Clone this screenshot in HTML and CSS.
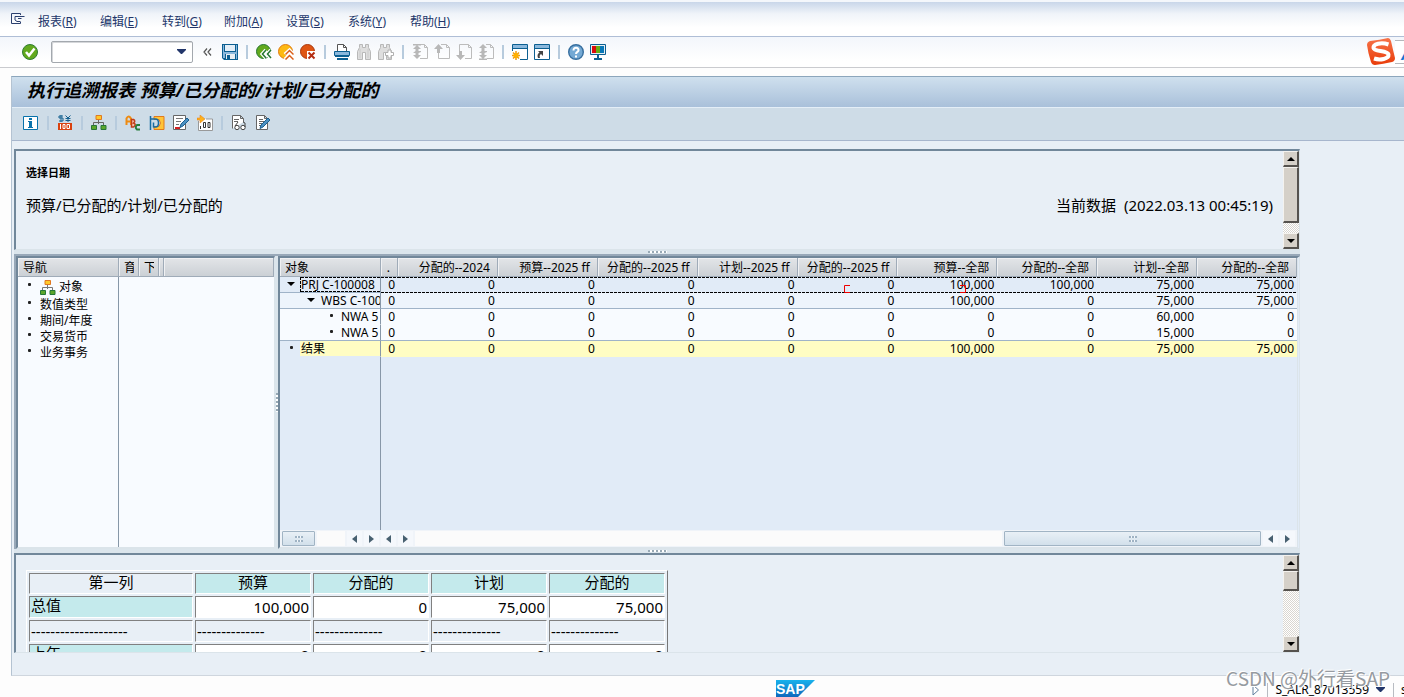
FILE: index.html
```html
<!DOCTYPE html>
<html lang="zh-CN">
<head>
<meta charset="utf-8">
<title>执行追溯报表</title>
<link rel="stylesheet" href="styles.css">
</head>
<body>
<nav class="menubar">
  <svg class="menu-icon" width="16" height="14" viewBox="0 0 16 14"><path d="M10.500 3V1.500H1.500v10h9V10M5 4.500h9.500M5 4.500v3.500l2 1.500h3.500M8 6.500h3.500" fill="none" stroke="#2b3f6e"/></svg>
  <div class="menus">
    <button>报表(<u>R</u>)</button><button>编辑(<u>E</u>)</button><button>转到(<u>G</u>)</button><button>附加(<u>A</u>)</button><button>设置(<u>S</u>)</button><button>系统(<u>Y</u>)</button><button>帮助(<u>H</u>)</button>
  </div>
</nav>

<div class="toolbar">
  <button class="ico ok" aria-label="回车"><svg viewBox="0 0 16 16"><circle cx="8" cy="8" r="7.500" fill="#62a91e" stroke="#2f7d32"/><path d="M4 8l3 3.500L12.500 4.500" fill="none" stroke="#fff" stroke-width="2.500"/></svg></button>
  <div class="command"><input type="text" aria-label="命令"><svg viewBox="0 0 10 6"><path d="M0 0h9v1L5 5H4L0 1z" fill="#22366a"/></svg></div>
  <button class="collapse" aria-label="收起"><svg viewBox="0 0 9 8"><path d="M4 .500L1 4l3 3.500M8 .500L5 4l3 3.500" fill="none" stroke="#555" stroke-width="1.200"/></svg></button>
  <button class="ico" aria-label="保存"><svg viewBox="0 0 16 16"><path d="M0 0h16v16H2l-2-2z" fill="#0c5f91"/><path d="M3 1h10v6H3z" fill="#e4eff8"/><path d="M1 8h14v2H1zM1 1h1v7H1zM14 1h1v7h-1zM1 10h2v4H1zM14 10h1v5h-1z" fill="#8bb8dc"/><path d="M4 10h9v5H4z" fill="#e8eef2"/><path d="M5 11h3v4H5z" fill="#0c5f91"/></svg></button>
  <i class="sep"></i>
  <button class="ico" aria-label="返回"><svg viewBox="0 0 16 16"><circle cx="7.500" cy="7.500" r="7" fill="#62a91e" stroke="#257632"/><path d="M10 6l-3.500 4 3.500 4M15 6l-3.500 4 3.500 4" fill="none" stroke="#fff" stroke-width="4"/><path d="M10 6l-3.500 4 3.500 4M15 6l-3.500 4 3.500 4" fill="none" stroke="#257632" stroke-width="1.500"/></svg></button>
  <button class="ico" aria-label="退出"><svg viewBox="0 0 16 16"><circle cx="7.500" cy="7.500" r="7" fill="#fdb913" stroke="#df7a12"/><path d="M7 10.500l4.500-4 4 4M7 15.500l4.500-4 4 4" fill="none" stroke="#fff" stroke-width="4"/><path d="M7.500 10.500l4-4 4 4M7.500 15.500l4-4 4 4" fill="none" stroke="#d95c18" stroke-width="1.500"/></svg></button>
  <button class="ico" aria-label="取消"><svg viewBox="0 0 16 16"><circle cx="7.500" cy="7.500" r="7" fill="#df5513" stroke="#a8380f"/><path d="M7 7h9v9H7z" fill="#fff"/><path d="M8.500 8.500l6 6M14.500 8.500l-6 6" stroke="#b42d12" stroke-width="2"/></svg></button>
  <i class="sep"></i>
  <button class="ico" aria-label="打印"><svg viewBox="0 0 16 16"><path d="M3.500 7V.500h6L12.500 3.500V7" fill="#fff" stroke="#555"/><path d="M9.500.500v3h3" fill="none" stroke="#555"/><path d="M.500 7.500h15v4H.500z" fill="#8bb8dc" stroke="#0c5f91"/><path d="M1 12h14v1H1zM3 14h11v2H3z" fill="#0c5f91"/></svg></button>
  <button class="ico" aria-label="查找" disabled><svg viewBox="0 0 16 16"><path d="M1.500 15.500v-8l2-4v-3h3v3h3v-3h3v3l2 4v8h-5v-7h-3v7z" fill="#dedede" stroke="#b8b8b8"/><path d="M4 5v9M12 5v9" stroke="#cacaca"/></svg></button>
  <button class="ico" aria-label="继续查找" disabled><svg viewBox="0 0 16 16"><path d="M.500 15.500v-8l2-4v-3h3v3h3v-3h3v3l2 4v8h-5v-7h-3v7z" fill="#dedede" stroke="#b8b8b8"/><path d="M10 6h3v2.500h2.500v3H13V14h-3v-2.500H7.500v-3H10z" fill="#fff" stroke="#b0b0b0"/></svg></button>
  <i class="sep"></i>
  <button class="ico" aria-label="首页" disabled><svg viewBox="0 0 16 16"><path d="M9 .500h3.500l3 3v11H8M12.500.500v3h3" fill="none" stroke="#bcbcbc"/><path d="M1 0h8v1.500H1zM5 1l4 4H6.500v2H9v1L6.500 9v2H9l-4 4-4-4h2.500V9H1l2.500-2V5H1z" fill="#b8b8b8"/></svg></button>
  <button class="ico" aria-label="上页" disabled><svg viewBox="0 0 16 16"><path d="M7 .500h5.500l3 3v11H4.500V8M12.500.500v3h3" fill="none" stroke="#bcbcbc"/><path d="M4.500 0L9 5H6v4H3V5H0z" fill="#b8b8b8"/></svg></button>
  <button class="ico" aria-label="下页" disabled><svg viewBox="0 0 16 16"><path d="M3.500 7V.500h9l3 3v11H9M12.500.500v3h3" fill="none" stroke="#bcbcbc"/><path d="M4.500 16L0 11h3V7h3v4h3z" fill="#b8b8b8"/></svg></button>
  <button class="ico" aria-label="末页" disabled><svg viewBox="0 0 16 16"><path d="M8 .500h4.500l3 3v11H9M12.500.500v3h3" fill="none" stroke="#bcbcbc"/><path d="M5 0l4 4H6.500v3H9v1L6.500 9v2H9l-4 4-4-4h2.500V9H1l2.500-2V4H1zM1 14.500h8V16H1z" fill="#b8b8b8"/></svg></button>
  <i class="sep"></i>
  <button class="ico" aria-label="新窗口"><svg viewBox="0 0 16 16"><path d="M.500.500h15v15H.500z" fill="#fff" stroke="#0c5f91"/><path d="M1 1h14v3H1z" fill="#8bb8dc"/><path d="M0 4h16v1H0z" fill="#0c5f91"/><path d="M0 7h8v9H0z" fill="#fff"/><path d="M4 7v9M0 11.500h8M1 8.500l6 6M7 8.500l-6 6" stroke="#ee9a10" stroke-width="1.500"/><circle cx="4" cy="11.500" r="2.500" fill="#ffb000"/></svg></button>
  <button class="ico" aria-label="快捷方式"><svg viewBox="0 0 16 16"><path d="M.500.500h15v15H.500z" fill="#fff" stroke="#0c5f91"/><path d="M1 1h14v3H1z" fill="#8bb8dc"/><path d="M0 4h16v1H0z" fill="#0c5f91"/><path d="M4 7h5v5L7 10q-2 1-1 4h-2q-1.500-4 1.500-5.500z" fill="#444"/></svg></button>
  <i class="sep"></i>
  <button class="ico" aria-label="帮助"><svg viewBox="0 0 16 16"><circle cx="8" cy="8" r="7.300" fill="#74a9d4" stroke="#376f9f" stroke-width="1.400"/><path d="M5.500 6.500c0-4 5.500-3.500 5 0C10.300 8 8 8 8 10M8 11.500v2" fill="none" stroke="#fff" stroke-width="2"/></svg></button>
  <button class="ico" aria-label="布局"><svg viewBox="0 0 16 16"><path d="M.500.500h15v10H.500z" fill="#e6eef4" stroke="#0c5f91"/><path d="M2 2h4v7H2z" fill="#d90b0b"/><path d="M6 2h4v7H6z" fill="#69ad13"/><path d="M10 2h4v7h-4z" fill="#0878b8"/><path d="M7 11h2v3h3v2H4v-2h3z" fill="#0c5f91"/></svg></button>
  <div class="ime">
    <svg class="ime-logo" viewBox="0 0 28 28"><defs><linearGradient id="sg" x2="0" y2="1"><stop stop-color="#f77349"/><stop offset="1" stop-color="#e93c09"/></linearGradient></defs><path d="M3 3Q13 2 21 0Q23 0 24 3Q26 12 28 20Q28 23 25 24Q16 26 8 27Q5 27 4 24Q1 15 0 7Q0 4 3 3z" fill="url(#sg)"/><path d="M21.500 6.500C14 4 6 6 6.500 10C7 14 20.500 12 21.500 16.500C22 21 13 22.500 7 20.500" fill="none" stroke="#fff" stroke-width="4"/></svg>
    <span>A</span>
  </div>
</div>

<main class="window">
  <h1 class="title">执行追溯报表 预算/已分配的/计划/已分配的</h1>
  <div class="apptools">
    <button class="ico" aria-label="信息"><svg viewBox="0 0 16 16"><path d="M.500 1.500h14v13H.500z" fill="#fff" stroke="#0872ab"/><path d="M6 3h3v2H6zM5 6h4v6h1v1H5v-1h1V7H5z" fill="#0872ab"/></svg></button>
    <i class="sep"></i>
    <button class="ico" aria-label="货币"><svg viewBox="0 0 16 16"><path d="M6 1H2v2h4v3H2M4 0v7M8.500.500L11 3l2.500-2.500M11 3v4M8.500 3.500h5M8.500 5.500h5" fill="none" stroke="#14608f"/><path d="M1 8h14v7H1z" fill="#d9420f"/><path d="M3.500 9v5M6 9.500h2v4H6zM10 9.500h2.500v4H10z" fill="none" stroke="#fff"/></svg></button>
    <i class="sep"></i>
    <button class="ico" aria-label="层次"><svg viewBox="0 0 16 16"><path d="M7.500 5v4M2.500 10V7.500h10V10" fill="none" stroke="#666"/><path d="M5 .500h5.500v4H5z" fill="#ffc928" stroke="#e07820"/><path d="M.500 10.500h5v4h-5zM10 10.500h5v4h-5z" fill="#5aa62b" stroke="#267638"/></svg></button>
    <i class="sep"></i>
    <button class="ico" aria-label="文本"><svg viewBox="0 0 16 16"><path d="M1.500 10V3.500Q3.500-.500 6 3.500V10M2 6.500h4" fill="none" stroke="#ee8b12" stroke-width="2"/><path d="M6.500 12V4.500h2q2.500 1.500 0 3.500q3.500 1.500 0 4z" fill="#f3c6b4" stroke="#c13d18" stroke-width="1.500"/><path d="M15 10h-3q-2.500 2 0 4.500h3" fill="none" stroke="#287e3d" stroke-width="2"/></svg></button>
    <button class="ico" aria-label="交换"><svg viewBox="0 0 16 16"><path d="M5 1.500h10v13H5v-3h5q3-3.500 0-7H5z" fill="#ffc438" stroke="#e27a1b"/><path d="M1.500 1v14M1.500 4h5q3 0 3 4t-3 4h-2M4.500 7.500v5" fill="none" stroke="#176ca3" stroke-width="1.500"/></svg></button>
    <button class="ico" aria-label="编辑"><svg viewBox="0 0 16 16"><path d="M.500.500h12v14H.500z" fill="#fff" stroke="#666"/><path d="M3 3.500h7M3 6.500h5M3 9.500h3" stroke="#777"/><path d="M2 12h5v2H2z" fill="#d51f20"/><path d="M7 12.500l1-3.500 6-6 2 2-6 6z" fill="#4c91c2" stroke="#195f91"/></svg></button>
    <button class="ico" aria-label="小数位"><svg viewBox="0 0 16 16"><path d="M1.500 6v9.500h14V4H9" fill="#fff" stroke="#999"/><path d="M0 3h3V0l5 4-5 4V5H0z" fill="#ffb21b" stroke="#e17b18" stroke-width=".500"/><path d="M6.500 7.500h2v5h-2zM11 7.500h2v5h-2zM3.500 11v3" fill="none" stroke="#333"/></svg></button>
    <i class="sep"></i>
    <button class="ico" aria-label="显示"><svg viewBox="0 0 16 16"><path d="M1.500 13.500V.500h8l3 3V7M9.500.500v3h3" fill="#fff" stroke="#666"/><path d="M3 4.500h5M3 6.500h4" stroke="#666"/><circle cx="6" cy="12.500" r="2.200" fill="#fff" stroke="#444"/><circle cx="12" cy="12.500" r="2.200" fill="#fff" stroke="#444"/><path d="M4 11l3-4M14 12V8l-2-1" fill="none" stroke="#444"/></svg></button>
    <button class="ico" aria-label="更改"><svg viewBox="0 0 16 16"><path d="M1.500.500h8l3 3v11h-11zM9.500.500v3h3" fill="#fff" stroke="#666"/><path d="M4 4.500h4M4 6.500h5M4 8.500h3M4 10.500h2" stroke="#666"/><path d="M5 13.500l1-3.500 7-7 2 2-7 7z" fill="#4c91c2" stroke="#195f91"/></svg></button>
  </div>

  <div class="panes">
    <section class="pane info">
      <div class="info-text">
        <h2>选择日期</h2>
        <div class="info-line"><span>预算/已分配的/计划/已分配的</span><span>当前数据&nbsp; (2022.03.13 00:45:19)</span></div>
      </div>
      <div class="vscroll"><button class="up" aria-label="上"></button><div class="thumb"></div><div class="track short"></div><button class="down" aria-label="下"></button></div>
    </section>
    <div class="hsplit"></div>

    <section class="middle">
      <div class="pane nav">
        <table class="tree">
          <colgroup><col class="c-name"><col class="c-small"><col class="c-small"><col class="c-tiny"><col></colgroup>
          <thead><tr><th>导航</th><th><span class="clip">育</span></th><th><span class="clip">下</span></th><th></th><th></th></tr></thead>
          <tbody>
            <tr class="first"><td><i class="dot"></i><svg width="16" height="16" viewBox="0 0 16 16"><path d="M7.500 5v4M2.500 10V7.500h10V10" fill="none" stroke="#777"/><path d="M5 .500h5.500v4H5z" fill="#ffc928" stroke="#e07820"/><path d="M.500 10.500h5v4h-5zM10 10.500h5v4h-5z" fill="#5aa62b" stroke="#267638"/></svg> 对象</td></tr>
            <tr><td><i class="dot"></i>数值类型</td></tr>
            <tr><td><i class="dot"></i>期间/年度</td></tr>
            <tr><td><i class="dot"></i>交易货币</td></tr>
            <tr><td><i class="dot"></i>业务事务</td></tr>
          </tbody>
        </table>
        <div class="fill"></div>
      </div>
      <div class="vsplit"></div>
      <div class="pane report">
        <table class="grid">
          <colgroup><col class="c-obj"><col class="c-dot"><col span="9"></colgroup>
          <thead><tr><th class="left">对象</th><th>.</th><th>分配的--2024</th><th>预算--2025 ff</th><th>分配的--2025 ff</th><th>计划--2025 ff</th><th>分配的--2025 ff</th><th>预算--全部</th><th>分配的--全部</th><th>计划--全部</th><th>分配的--全部</th></tr></thead>
          <tbody>
            <tr class="sel"><td><div class="node"><i class="mark tri"></i><span>PRJ C-100008</span></div></td><td>0</td><td>0</td><td>0</td><td>0</td><td>0</td><td>0</td><td>100,000</td><td>100,000</td><td>75,000</td><td>75,000</td></tr>
            <tr class="wbs"><td><div class="node l1"><i class="mark tri"></i><span>WBS C-100</span></div></td><td>0</td><td>0</td><td>0</td><td>0</td><td>0</td><td>0</td><td>100,000</td><td>0</td><td>75,000</td><td>75,000</td></tr>
            <tr class="nwa"><td><div class="node l2"><i class="mark"></i><span>NWA 5</span></div></td><td>0</td><td>0</td><td>0</td><td>0</td><td>0</td><td>0</td><td>0</td><td>0</td><td>60,000</td><td>0</td></tr>
            <tr class="nwa last"><td><div class="node l2"><i class="mark"></i><span>NWA 5</span></div></td><td>0</td><td>0</td><td>0</td><td>0</td><td>0</td><td>0</td><td>0</td><td>0</td><td>15,000</td><td>0</td></tr>
            <tr class="sum"><td><div class="node"><i class="mark"></i><span>结果</span></div></td><td>0</td><td>0</td><td>0</td><td>0</td><td>0</td><td>0</td><td>100,000</td><td>0</td><td>75,000</td><td>75,000</td></tr>
          </tbody>
        </table>
        <div class="fill"></div>
        <div class="hbars">
          <div class="hbar left"><div class="hthumb"></div><div class="space"></div><button class="prev" aria-label="左"></button><button class="next" aria-label="右"></button></div>
          <div class="hbar right"><button class="prev" aria-label="左"></button><button class="next" aria-label="右"></button><div class="space"></div><div class="hthumb wide"></div><button class="prev" aria-label="左"></button><button class="next" aria-label="右"></button></div>
        </div>
        <svg class="corner a" viewBox="0 0 6 8"><path d="M6 .500H.500V7.500H6" fill="none" stroke="#e00"/></svg>
        <svg class="corner b" viewBox="0 0 6 8"><path d="M0 .500H5.500V7.500H0" fill="none" stroke="#e00"/></svg>
      </div>
    </section>
    <div class="hsplit"></div>

    <section class="pane detail">
      <div class="detail-body">
        <table class="values">
          <thead><tr><th class="plain">第一列</th><th>预算</th><th>分配的</th><th>计划</th><th>分配的</th></tr></thead>
          <tbody>
            <tr><th>总值</th><td>100,000</td><td>0</td><td>75,000</td><td>75,000</td></tr>
            <tr class="rule"><td>--------------------</td><td>--------------</td><td>--------------</td><td>--------------</td><td>--------------</td></tr>
            <tr><th>上年</th><td>0</td><td>0</td><td>0</td><td>0</td></tr>
          </tbody>
        </table>
      </div>
      <div class="vscroll"><button class="up" aria-label="上"></button><div class="thumb small"></div><div class="track"></div><button class="down" aria-label="下"></button></div>
    </section>
  </div>
</main>

<footer class="status">
  <svg class="sap" width="39" height="17" viewBox="0 0 39 17"><defs><linearGradient id="sp" x2="0" y2="1"><stop stop-color="#19b2ec"/><stop offset="1" stop-color="#0f68bc"/></linearGradient></defs><path d="M0 0h39L22 17H0z" fill="url(#sp)"/><text x="0" y="14" font-family="Liberation Sans, sans-serif" font-weight="bold" font-size="14" fill="#fff">SAP</text></svg>
  <div class="session">
    <svg width="8" height="12" viewBox="0 0 8 12"><path d="M1 1l5.500 5L1 11z" fill="#fff" stroke="#5f7f9d"/></svg>
    <i class="bar"></i><span>S_ALR_87013559</span>
    <svg width="10" height="6" viewBox="0 0 10 6"><path d="M0 0h9v1L5 5H4L0 1z" fill="#22366a"/></svg>
    <i class="bar"></i><span class="server">s</span>
  </div>
</footer>
<div class="watermark">CSDN @外行看SAP</div>
</body>
</html>
```
FILE: styles.css
```css
* { box-sizing: border-box; }
body {
  margin: 0;
  height: 100vh;
  overflow: hidden;
  display: flex;
  flex-direction: column;
  background: #fdfdfd;
  color: #000;
  font: 12px/16px "Noto Sans", "Noto Sans CJK SC", sans-serif;
}
button { border: 0; padding: 0; margin: 0; background: none; font: inherit; color: inherit; }
table { border-collapse: separate; border-spacing: 0; }
svg { display: block; flex: none; }

.menubar {
  flex: none;
  height: 37px;
  display: flex;
  align-items: center;
  padding: 6px 0 0 10px;
  border-top: 2px solid #f4f7fb;
  border-bottom: 1px solid #afbed6;
  background: linear-gradient(#c9d6e9, #f0f4f9 35%, #fff 75%);
}
.menu-icon { margin: 0 12px 6px 0; }
.menus { display: grid; grid-auto-flow: column; grid-auto-columns: 62px; color: #22366a; }
.menus button { text-align: left; white-space: nowrap; }

.toolbar {
  flex: none;
  height: 31px;
  display: flex;
  align-items: center;
  gap: 6px;
  padding: 0 0 1px 22px;
  border-bottom: 1px solid #cacbcf;
  background: linear-gradient(#f3f6fb, #fff 80%);
}
.ico { width: 16px; height: 16px; flex: none; }
.ico svg { width: 16px; height: 16px; }
.ok { margin-right: 7px; }
.sep { flex: none; width: 2px; height: 14px; margin: 0 2px; background: #b7cbdd; }
.command { position: relative; width: 142px; }
.command input { display: block; width: 100%; height: 22px; border: 1px solid #a3a8ae; border-radius: 2px; background: #fff; box-shadow: inset 1px 1px 0 #d5d7da; }
.command svg { position: absolute; right: 6px; top: 8px; width: 10px; height: 6px; }
.collapse { margin: 0 4px; }
.collapse svg { width: 9px; height: 8px; }
.ime { margin-left: auto; width: 37px; display: flex; align-items: center; overflow: hidden; }
.ime-logo { width: 28px; height: 28px; }
.ime span { flex: none; width: 40px; height: 24px; padding-left: 6px; border: 1px solid #b5b7bb; border-left: 0; background: #fff; color: #1474d4; font: italic bold 18px/26px "Liberation Sans", sans-serif; }

.window {
  flex: 1;
  min-height: 0;
  display: flex;
  flex-direction: column;
  margin: 8px 0 0 11px;
  border-top: 1px solid #8ca6bc;
  border-left: 1px solid #b4c3d2;
  border-bottom: 1px solid #cfd6de;
  background: #e8eff6;
}
.title {
  flex: none;
  margin: 0;
  height: 31px;
  padding-left: 15px;
  border-bottom: 1px solid #e4eef7;
  background: linear-gradient(#cfe0ee, #a9c0da);
  font: italic bold 18px/26px "Noto Sans", "Noto Sans CJK SC", sans-serif;
  white-space: nowrap;
}
.apptools { flex: none; display: flex; align-items: center; gap: 8px; height: 33px; padding: 0 0 2px 11px; border-bottom: 1px solid #a7b6cd; background: #cedce7; }
.apptools .sep { margin: 0; }

.panes { flex: 1; min-height: 0; display: flex; flex-direction: column; margin: 8px 104px 22px 2px; }
.pane { border: 1px solid #dbe4ea; border-top: 2px solid #71879a; border-left: 2px solid #71879a; }
.info { flex: none; height: 101px; display: flex; }
.info-text { flex: 1; padding: 13px 10px 0; }
.info h2 { margin: 0; font-size: 11px; line-height: 18px; }
.info-line { display: flex; justify-content: space-between; margin-top: 12px; font-size: 15px; line-height: 22px; }

.vscroll { flex: none; width: 16px; display: flex; flex-direction: column; }
.vscroll button, .thumb { flex: none; height: 16px; display: grid; place-items: center; background: #d5d0c8; border: 1px solid #f4f2ee; border-right: 2px solid #55524e; border-bottom: 2px solid #55524e; }
.vscroll button::before { content: ""; border: 4px solid transparent; border-top-width: 0; border-bottom-color: #000; }
.vscroll .down::before { border-width: 4px 4px 0; border-top-color: #000; }
.vscroll .thumb { height: 56px; }
.vscroll .thumb.small { height: 20px; }
.track { flex: 1; background: repeating-conic-gradient(#fff 0 25%, #d9d6d0 0 50%) 0 0 / 2px 2px; }

.hsplit { flex: none; height: 4px; display: grid; place-items: center; background: #dbe5ec; }
.hsplit::before { content: ""; width: 19px; height: 2px; background: repeating-linear-gradient(90deg, #98a9b5 0 2px, #fff 2px 4px); }

.middle { flex: 1; min-height: 0; display: flex; border-top: 2px solid #98a8b8; border-left: 2px solid #98a8b8; }
.nav, .report { display: flex; flex-direction: column; min-width: 0; }
.nav { width: 259px; flex: none; background: #f8fbff; border-bottom-width: 2px; }
.vsplit { flex: none; width: 3px; display: grid; place-items: center; background: #dbe5ec; }
.vsplit::before { content: ""; width: 2px; height: 19px; background: repeating-linear-gradient(#98a9b5 0 2px, #fff 2px 4px); }
.report { flex: 1; position: relative; background: #e1ebf7; border-right: 3px double #dbe4ea; border-bottom: 2px solid #dbe4ea; }

.tree, .grid { flex: none; width: 100%; table-layout: fixed; }
.tree th, .grid th { height: 19px; padding: 2px 7px 0 0; border-right: 1px solid #9fabb8; border-bottom: 1px solid #9fabb8; background: linear-gradient(#e3e5e8, #cbd0d5); box-shadow: inset 1px 1px 0 #f0f1f3; font-weight: normal; line-height: 16px; text-align: right; white-space: nowrap; }
.tree th { padding: 2px 0 0 5px; text-align: left; }
.c-name, .c-obj { width: 101px; }
.c-small { width: 20px; }
.c-tiny { width: 5px; }
.c-dot { width: 17px; }
.clip { display: block; width: 10px; overflow: hidden; }
.tree td { height: 16px; padding: 0 0 0 10px; border-right: 1px solid #8797a8; white-space: nowrap; }
.tree td > * { display: inline-block; vertical-align: middle; }
.tree .first td { height: 20px; line-height: 20px; }
.dot { width: 3px; height: 3px; margin: -6px 9px 0 0; border-radius: 1px; background: #222; }
.fill { flex: 1; width: 101px; border-right: 1px solid #8797a8; }

.grid th.left { text-align: left; padding-left: 5px; }
.grid td { height: 16px; padding: 1px 3px 0 0; line-height: 14px; text-align: right; white-space: nowrap; border-bottom: 1px solid transparent; }
.grid td:first-child { padding: 0; border-right: 1px solid #8797a8; text-align: left; overflow: hidden; }
.node { display: flex; height: 15px; }
.l1 { padding-left: 20px; }
.l2 { padding-left: 40px; }
.node span { flex: 1; min-width: 0; height: 15px; overflow: hidden; padding: 1px 0 0 1px; }
.mark { flex: none; width: 20px; display: grid; place-items: center; padding: 0 0 2px 2px; }
.mark::before { content: ""; width: 3px; height: 3px; border-radius: 1px; background: #222; }
.mark.tri::before { width: 0; height: 0; border: 4px solid transparent; border-top-color: #000; border-bottom: 0; border-radius: 0; background: none; }
.sel td, .sel .node span {
  background:
    repeating-linear-gradient(90deg, #000 0 3px, #e1ebf7 3px 4px) 0 0 / 100% 1px no-repeat,
    repeating-linear-gradient(90deg, #000 0 3px, #e1ebf7 3px 4px) 0 100% / 100% 1px no-repeat;
}
.grid .sel td { border-bottom: 0; padding-bottom: 1px; }
.grid .sel td:first-child { background: none; padding: 0; border-bottom: 1px solid #9fb3c8; }
.sel .node span { border-left: 1px dashed #000; padding-left: 0; }
.grid .wbs td, .grid .nwa.last td { border-bottom-color: #9fb3c8; }
.wbs td { background: #edf4fc; }
.nwa td { background: #f8fbff; }
.sum td, .sum .node span { background: #fffdc3; }
.grid .sum td:first-child { background: none; }

.hbars { flex: none; display: flex; height: 17px; }
.hbar { display: flex; gap: 2px; padding: 1px 2px; background: #f0f4f9; }
.hbar.left { width: 101px; }
.hbar.right { flex: 1; padding-left: 0; }
.space { flex: 1; background: #fbfbfb; }
.hbar button { width: 15px; display: grid; place-items: center; background: #f5f8fc; }
.hbar button::before { content: ""; border: 4px solid transparent; }
.hbar .prev::before { border-right: 5px solid #486070; border-left: 0; }
.hbar .next::before { border-left: 5px solid #486070; border-right: 0; }
.hthumb { width: 33px; height: 15px; display: grid; place-items: center; border: 1px solid #a1b4c4; border-radius: 1px; background: linear-gradient(#e9f0f6, #d2e0eb); }
.hthumb::before { content: ""; width: 8px; height: 6px; background: repeating-linear-gradient(#0000 0 2px, #dfe9f1 2px 4px), repeating-linear-gradient(90deg, #9fb3c4 0 2px, #f5f8fb 2px 3px); }
.hthumb.wide { width: 257px; }
.corner { position: absolute; width: 6px; height: 8px; top: 27px; }
.corner.a { left: 564px; }
.corner.b { left: 680px; }

.detail { flex: none; height: 100px; display: flex; }
.detail-body { flex: 1; overflow: hidden; padding: 15px 0 0 10px; }
.values { table-layout: fixed; width: 642px; border-spacing: 2px; border: 1px solid #fff; border-right-color: #777; font-size: 15px; line-height: 20px; }
.values th, .values td { height: 22px; padding: 0 1px; border: 1px solid #fff; border-top-color: #808080; border-left-color: #808080; }
.values th { width: 116px; font-weight: normal; line-height: 17px; vertical-align: top; background: #c4eaec; }
.values thead th { height: 21px; }
.values .plain { width: 164px; background: none; }
.values tbody th { text-align: left; }
.values td { text-align: right; background: #fff; }
.values .rule td { text-align: left; background: none; }

.status { flex: none; height: 21px; padding: 4px 0 0 776px; display: flex; overflow: hidden; }
.session { margin-left: auto; display: flex; align-items: center; gap: 7px; height: 17px; white-space: nowrap; padding-top: 3px; }
.bar { width: 1px; height: 14px; background: #b8bcc2; }
.server { width: 3px; overflow: hidden; }
.watermark { position: absolute; right: 14px; bottom: 7px; color: #969ba1; font: 19px/24px "Noto Sans CJK SC", sans-serif; text-shadow: 1px 1px 0 #fff, -1px -1px 0 #fff; }
```
